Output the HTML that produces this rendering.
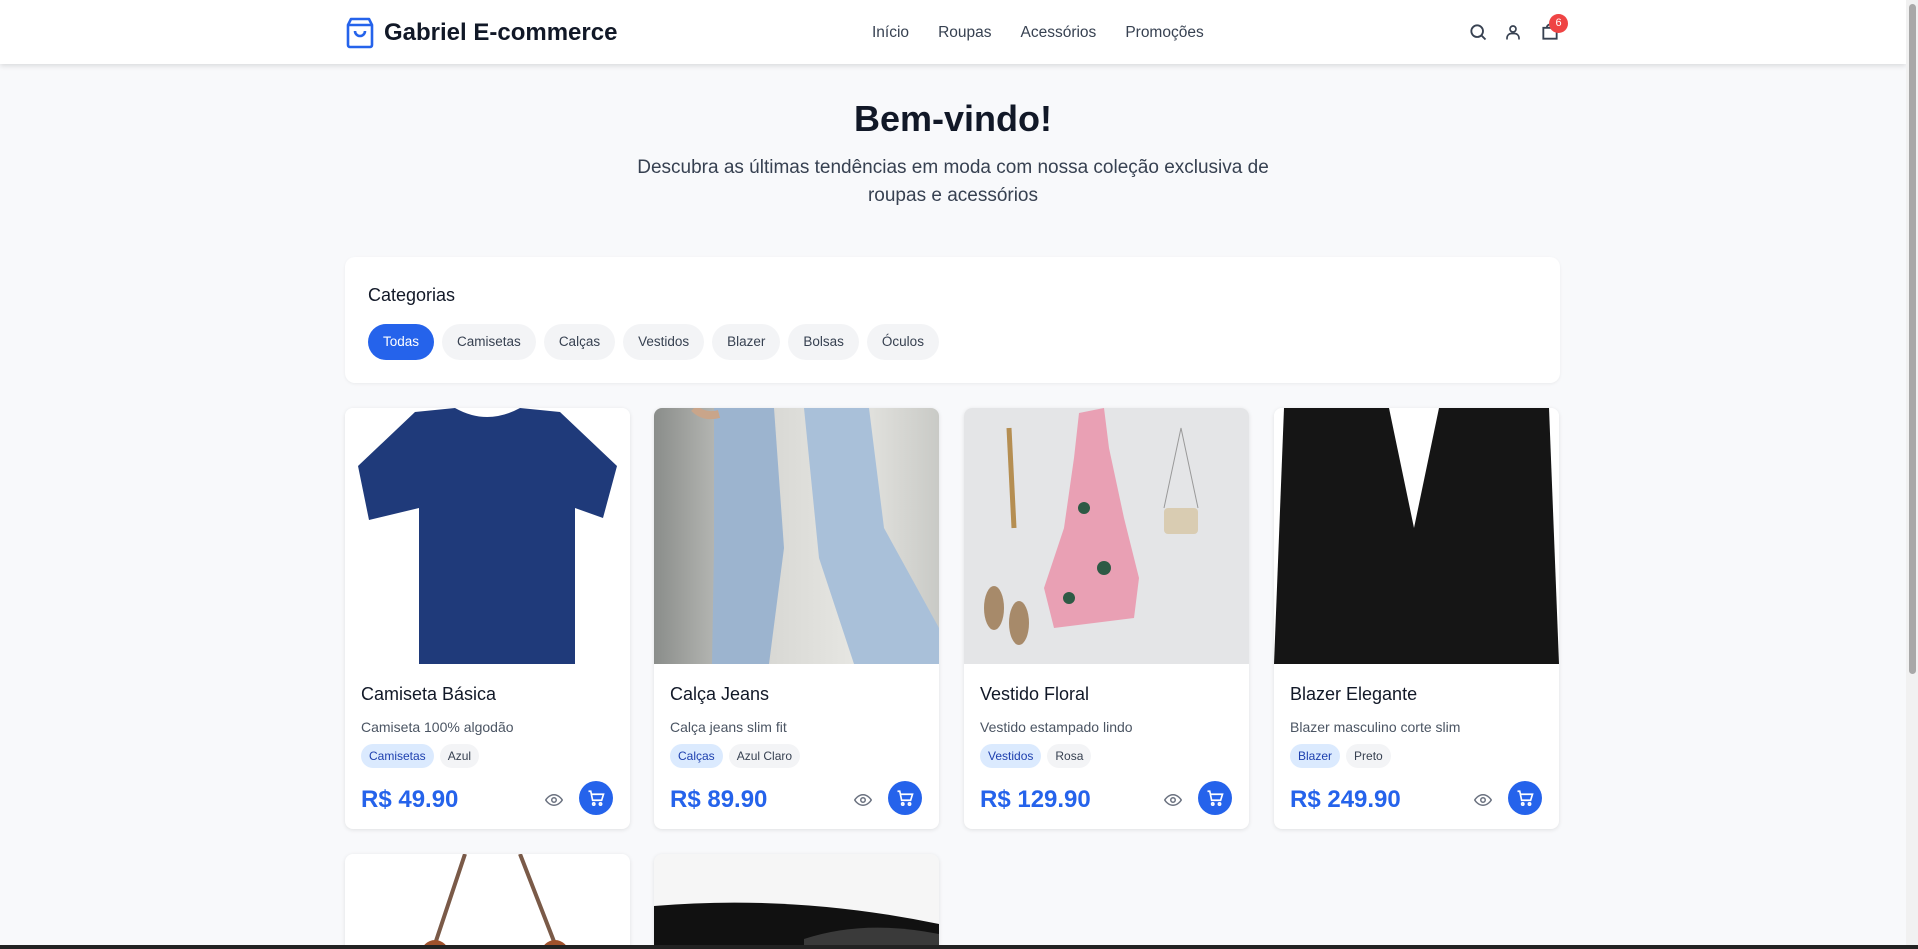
<!DOCTYPE html>
<html><head><meta charset="utf-8">
<style>
*{box-sizing:border-box;margin:0;padding:0}
html,body{width:1918px;height:949px;overflow:hidden}
body{background:#f8f9fb;font-family:"Liberation Sans",sans-serif;color:#111827;position:relative}
.hdr{position:absolute;left:0;top:0;width:1906px;height:64px;background:#fff;box-shadow:0 2px 5px rgba(0,0,0,.12)}
.logo{position:absolute;left:346px;top:17px;display:flex;align-items:center;gap:10px;font-weight:bold;font-size:24px;color:#111827}
.nav{position:absolute;left:872px;top:24px;font-size:15.5px;color:#374151}
.nav span{margin-right:29px}
.ic{position:absolute;top:22px}
.badge{position:absolute;left:1549px;top:14px;width:19px;height:19px;border-radius:50%;background:#ef4444;color:#fff;font-size:11px;text-align:center;line-height:19px}
h1{position:absolute;left:0;width:1906px;top:98px;text-align:center;font-size:36px;font-weight:bold}
.sub{position:absolute;left:620px;width:666px;top:154px;text-align:center;font-size:19px;line-height:28px;color:#374151}
.cat{position:absolute;left:345px;top:257px;width:1215px;height:126px;background:#fff;border-radius:10px;box-shadow:0 1px 3px rgba(0,0,0,.06)}
.cat h3{position:absolute;left:23px;top:28px;font-size:18px;font-weight:normal;color:#111827}
.pills{position:absolute;left:23px;top:67px;display:flex;gap:8px}
.pill{height:36px;border-radius:18px;background:#f3f4f6;padding:0 15px;font-size:13.5px;line-height:36px;color:#374151}
.pill.on{background:#2563eb;color:#fff}
.card{position:absolute;width:285px;background:#fff;border-radius:8px;box-shadow:0 1px 4px rgba(0,0,0,.1);overflow:hidden}
.img{height:256px;position:relative;overflow:hidden}
.t{position:absolute;left:16px;top:276px;font-size:18px}
.d{position:absolute;left:16px;top:311px;font-size:14px;color:#4b5563}
.tags{position:absolute;left:16px;top:336px;display:flex;gap:6px}
.tag{height:24px;border-radius:12px;padding:0 8px;font-size:12px;line-height:24px;background:#f3f4f6;color:#374151}
.tag.b{background:#dbeafe;color:#1e40af}
.p{position:absolute;left:16px;top:378px;font-size:24px;font-weight:bold;color:#2563eb}
.eye{position:absolute;left:200px;top:385px}
.cb{position:absolute;left:234px;top:373px;width:34px;height:34px;border-radius:50%;background:#2563eb}
.cb svg{position:absolute;left:8px;top:8px}
.sb{position:absolute;right:0;top:0;width:12px;height:945px;background:#f1f1f1}
.sb div{position:absolute;left:3px;top:4px;width:7px;height:670px;background:#a8a8a8;border-radius:4px}
.bar{position:absolute;left:0;top:945px;width:1918px;height:4px;background:#222}
</style></head><body>
<div class="hdr">
 <div class="logo"><svg width="28" height="32" viewBox="0 0 28 32" fill="none" stroke="#2563eb" stroke-width="2.6" stroke-linejoin="round"><path d="M5 2h18l3 6v20a2 2 0 0 1-2 2H4a2 2 0 0 1-2-2V8z"/><path d="M2 8h24"/><path d="M9 14a5 5 0 0 0 10 0"/></svg>Gabriel E-commerce</div>
 <div class="nav"><span>Início</span><span>Roupas</span><span>Acessórios</span><span>Promoções</span></div>
 <svg class="ic" style="left:1468px" width="20" height="20" viewBox="0 0 24 24" fill="none" stroke="#374151" stroke-width="2.2"><circle cx="11" cy="11" r="7"/><path d="M16 16l5 5"/></svg>
 <svg class="ic" style="left:1504px" width="18" height="20" viewBox="0 0 24 24" fill="none" stroke="#374151" stroke-width="2.2"><circle cx="12" cy="8" r="4"/><path d="M4 22v-2a6 6 0 0 1 6-6h4a6 6 0 0 1 6 6v2"/></svg>
 <svg class="ic" style="left:1540px" width="20" height="20" viewBox="0 0 24 24" fill="none" stroke="#374151" stroke-width="2.2"><path d="M4 7h16v13H4z"/><path d="M8 7a4 4 0 0 1 8 0"/></svg>
 <div class="badge">6</div>
</div>
<h1>Bem-vindo!</h1>
<div class="sub">Descubra as últimas tendências em moda com nossa coleção exclusiva de roupas e acessórios</div>
<div class="cat"><h3>Categorias</h3>
 <div class="pills"><div class="pill on">Todas</div><div class="pill">Camisetas</div><div class="pill">Calças</div><div class="pill">Vestidos</div><div class="pill">Blazer</div><div class="pill">Bolsas</div><div class="pill">Óculos</div></div>
</div>

<div class="card" style="left:345px;top:408px;height:421px">
 <div class="img" style="background:#fff"><svg width="285" height="256"><path d="M70 4 L110 0 Q142 18 175 0 L215 4 L272 58 L258 110 L230 100 L230 256 L74 256 L74 100 L24 112 L13 58 Z" fill="#1f3a7a"/></svg></div>
 <div class="t">Camiseta Básica</div><div class="d">Camiseta 100% algodão</div>
 <div class="tags"><div class="tag b">Camisetas</div><div class="tag">Azul</div></div>
 <div class="p">R$ 49.90</div>
 <svg class="eye" width="18" height="14" viewBox="0 0 24 18" fill="none" stroke="#6b7280" stroke-width="2"><path d="M1 9s4-7 11-7 11 7 11 7-4 7-11 7S1 9 1 9z"/><circle cx="12" cy="9" r="3"/></svg>
 <div class="cb"><svg width="18" height="18" viewBox="0 0 24 24" fill="none" stroke="#fff" stroke-width="2.2"><path d="M2 3h3l2.5 12h12L22 7H6"/><circle cx="9" cy="20" r="1.5"/><circle cx="18" cy="20" r="1.5"/></svg></div>
</div>

<div class="card" style="left:654px;top:408px;height:421px">
 <div class="img" style="background:linear-gradient(90deg,#8a8d8a,#d8d8d4 40%,#e6e6e2 70%,#c9cac6)"><svg width="285" height="256"><path d="M60 0 L120 0 L130 140 L115 256 L58 256 L60 140 Z" fill="#9cb4cf"/><path d="M150 0 L215 0 L230 120 L285 220 L285 256 L200 256 L165 150 Z" fill="#a9c0d9"/><path d="M40 0 q10 10 25 6" stroke="#c9a58a" stroke-width="8" fill="none"/></svg></div>
 <div class="t">Calça Jeans</div><div class="d">Calça jeans slim fit</div>
 <div class="tags"><div class="tag b">Calças</div><div class="tag">Azul Claro</div></div>
 <div class="p">R$ 89.90</div>
 <svg class="eye" width="18" height="14" viewBox="0 0 24 18" fill="none" stroke="#6b7280" stroke-width="2"><path d="M1 9s4-7 11-7 11 7 11 7-4 7-11 7S1 9 1 9z"/><circle cx="12" cy="9" r="3"/></svg>
 <div class="cb"><svg width="18" height="18" viewBox="0 0 24 24" fill="none" stroke="#fff" stroke-width="2.2"><path d="M2 3h3l2.5 12h12L22 7H6"/><circle cx="9" cy="20" r="1.5"/><circle cx="18" cy="20" r="1.5"/></svg></div>
</div>

<div class="card" style="left:964px;top:408px;height:421px">
 <div class="img" style="background:#e4e5e7"><svg width="285" height="256"><path d="M115 5 L140 0 L145 40 L160 110 L175 170 L170 210 L90 220 L80 180 L100 120 L110 50 Z" fill="#e9a0b4"/><circle cx="120" cy="100" r="6" fill="#2e5a45"/><circle cx="140" cy="160" r="7" fill="#2e5a45"/><circle cx="105" cy="190" r="6" fill="#2e5a45"/><rect x="200" y="100" width="34" height="26" rx="4" fill="#d9ccb2"/><path d="M200 100 L217 20 L234 100" stroke="#999" fill="none"/><path d="M45 20 L50 120" stroke="#b58e52" stroke-width="5"/><ellipse cx="30" cy="200" rx="10" ry="22" fill="#a78a6a"/><ellipse cx="55" cy="215" rx="10" ry="22" fill="#a78a6a"/></svg></div>
 <div class="t">Vestido Floral</div><div class="d">Vestido estampado lindo</div>
 <div class="tags"><div class="tag b">Vestidos</div><div class="tag">Rosa</div></div>
 <div class="p">R$ 129.90</div>
 <svg class="eye" width="18" height="14" viewBox="0 0 24 18" fill="none" stroke="#6b7280" stroke-width="2"><path d="M1 9s4-7 11-7 11 7 11 7-4 7-11 7S1 9 1 9z"/><circle cx="12" cy="9" r="3"/></svg>
 <div class="cb"><svg width="18" height="18" viewBox="0 0 24 24" fill="none" stroke="#fff" stroke-width="2.2"><path d="M2 3h3l2.5 12h12L22 7H6"/><circle cx="9" cy="20" r="1.5"/><circle cx="18" cy="20" r="1.5"/></svg></div>
</div>

<div class="card" style="left:1274px;top:408px;height:421px">
 <div class="img" style="background:#fff"><svg width="285" height="256"><path d="M10 0 L275 0 L285 256 L0 256 Z" fill="#151515"/><path d="M115 0 L140 120 L165 0" fill="#fff"/></svg></div>
 <div class="t">Blazer Elegante</div><div class="d">Blazer masculino corte slim</div>
 <div class="tags"><div class="tag b">Blazer</div><div class="tag">Preto</div></div>
 <div class="p">R$ 249.90</div>
 <svg class="eye" width="18" height="14" viewBox="0 0 24 18" fill="none" stroke="#6b7280" stroke-width="2"><path d="M1 9s4-7 11-7 11 7 11 7-4 7-11 7S1 9 1 9z"/><circle cx="12" cy="9" r="3"/></svg>
 <div class="cb"><svg width="18" height="18" viewBox="0 0 24 24" fill="none" stroke="#fff" stroke-width="2.2"><path d="M2 3h3l2.5 12h12L22 7H6"/><circle cx="9" cy="20" r="1.5"/><circle cx="18" cy="20" r="1.5"/></svg></div>
</div>

<div class="card" style="left:345px;top:854px;height:120px"><svg width="285" height="100"><path d="M120 0 L90 90 M175 0 L210 90" stroke="#7a5a48" stroke-width="4"/><ellipse cx="90" cy="100" rx="14" ry="14" fill="#a0522d"/><ellipse cx="210" cy="100" rx="14" ry="14" fill="#a0522d"/></svg></div>
<div class="card" style="left:654px;top:854px;height:120px;background:#f6f6f6"><svg width="285" height="100"><path d="M0 52 Q140 40 285 70 L285 100 L0 100 Z" fill="#111"/><path d="M150 85 Q210 65 285 80 L285 100 L150 100Z" fill="#3a3a3a"/></svg></div>

<div class="sb"><div></div></div>
<div class="bar"></div>
</body></html>
